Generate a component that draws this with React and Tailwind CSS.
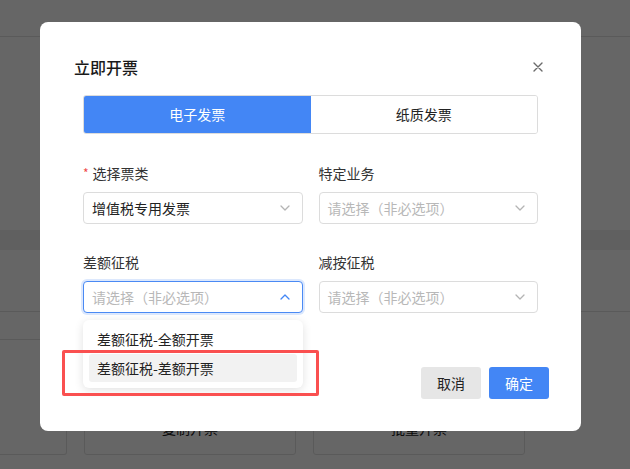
import { useState } from "react";

const FONT = { fontFamily: '"Noto Sans CJK SC", "Noto Sans", sans-serif' };

function Chevron({ up = false, active = false }) {
  return (
    <svg width="10" height="6" viewBox="0 0 10 6" className="shrink-0">
      <polyline
        points={up ? "1,5 5,1 9,5" : "1,1 5,5 9,1"}
        fill="none"
        stroke={active ? "#4386f5" : "#b4b4b4"}
        strokeWidth="1.3"
        strokeLinecap="round"
        strokeLinejoin="round"
      />
    </svg>
  );
}

function Select({ value, placeholder = "请选择（非必选项）", open = false }) {
  return (
    <div
      className={
        "h-[32px] rounded-[4px] border bg-white pl-[8px] pr-[12px] flex items-center justify-between text-[14px] " +
        (open
          ? "border-[#4a8af4] shadow-[0_0_0_2px_#dce8fd]"
          : "border-[#dcdcdc]")
      }
    >
      {value ? (
        <span className="text-[#222]">{value}</span>
      ) : (
        <span className="text-[#b8b8b8]">{placeholder}</span>
      )}
      <Chevron up={open} active={open} />
    </div>
  );
}

function Field({ label, required, children }) {
  return (
    <div className="flex flex-col gap-[9px]">
      <div className="h-[20px] flex items-center text-[14px] text-[#333]">
        {required && <span className="text-[#f04a4a] mr-[4px] text-[12px]">*</span>}
        {label}
      </div>
      {children}
    </div>
  );
}

export default function App() {
  const [tab, setTab] = useState("electronic");

  return (
    <div className="relative w-[630px] h-[469px] overflow-hidden bg-white" style={FONT}>

      {/* page behind the overlay */}

      <div className="flex flex-col">
        <div className="h-[37px] border-b border-[#e2e2e2]" />
        <div className="h-[193px]" />
        <div className="h-[20px] bg-[#f0f0f0]" />
        <div className="h-[62px] border-b border-[#e2e2e2]" />
        <div className="h-[27px]" />
        <div className="flex gap-[17px] pl-0">
          <div className="w-[67px] h-[116px] border border-l-0 border-[#e2e2e2] rounded-r-[3px]" />
          <div className="w-[212px] h-[116px] border border-[#e2e2e2] rounded-[3px] pt-[78px] text-center text-[14px] text-[#222]">
            复制开票
          </div>
          <div className="w-[212px] h-[116px] border border-[#e2e2e2] rounded-[3px] pt-[78px] text-center text-[14px] text-[#222]">
            批量开票
          </div>
        </div>
      </div>

      {/* overlay + dialog */}

      <div className="absolute inset-0 bg-black/60 pl-[40px] pt-[22px]">
        <div className="relative w-[541px] h-[409px] bg-white rounded-[8px] flex flex-col">

          <div className="flex items-center justify-between pl-[34px] pr-[38px] pt-[33px] h-[57px]">
            <h2 className="text-[16px] font-medium text-[#1a1a1a] leading-6">立即开票</h2>
            <button className="text-[#666]">
              <svg width="10" height="10" viewBox="0 0 10 10">
                <path d="M1 1L9 9M9 1L1 9" stroke="#6b6b6b" strokeWidth="1.4" strokeLinecap="round" />
              </svg>
            </button>
          </div>

          <div className="mx-[43px] mt-[16px] h-[39px] flex rounded-[3px] border border-[#dcdcdc] overflow-hidden text-[14px]">
            <button
              onClick={() => setTab("electronic")}
              className={
                "flex-1 flex items-center justify-center " +
                (tab === "electronic" ? "bg-[#4386f5] text-white" : "bg-white text-[#222]")
              }
            >
              电子发票
            </button>
            <button
              onClick={() => setTab("paper")}
              className={
                "flex-1 flex items-center justify-center " +
                (tab === "paper" ? "bg-[#4386f5] text-white" : "bg-white text-[#222]")
              }
            >
              纸质发票
            </button>
          </div>

          <div className="mx-[43px] mt-[29px] grid grid-cols-2 gap-x-[16px] gap-y-[28px]">
            <Field label="选择票类" required>
              <Select value="增值税专用发票" />
            </Field>
            <Field label="特定业务">
              <Select />
            </Field>
            <Field label="差额征税">
              <div className="relative">
                <Select open />
                <div className="absolute left-0 right-0 top-[39px] z-10 bg-white rounded-[6px] shadow-[0_2px_10px_rgba(0,0,0,0.12)] px-[6px] pt-[4px] pb-[6px] text-[14px] text-[#222]">
                  <div className="h-[30px] flex items-center px-[8px] rounded-[3px]">差额征税-全额开票</div>
                  <div className="h-[28px] flex items-center px-[8px] rounded-[3px] bg-[#f2f2f2]">差额征税-差额开票</div>
                </div>
              </div>
            </Field>
            <Field label="减按征税">
              <Select />
            </Field>
          </div>

          <div className="mt-auto mb-[32px] mr-[32px] flex justify-end gap-[8px] text-[14px]">
            <button className="w-[60px] h-[32px] rounded-[3px] bg-[#e6e6e6] text-[#222]">取消</button>
            <button className="w-[60px] h-[32px] rounded-[3px] bg-[#4386f5] text-white">确定</button>
          </div>

          {/* highlight marker */}
          <div className="absolute left-[22px] top-[328px] w-[257px] h-[46px] border-[3px] border-[#fa5050] rounded-[2px] z-20 pointer-events-none" />
        </div>
      </div>
    </div>
  );
}
